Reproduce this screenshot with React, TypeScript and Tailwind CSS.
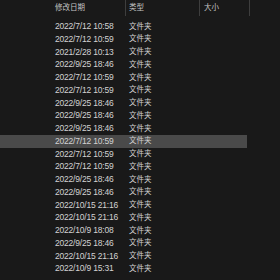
const rows: [string, boolean?][] = [
  ["2022/7/12 10:58"],
  ["2022/7/12 10:59"],
  ["2021/2/28 10:13"],
  ["2022/9/25 18:46"],
  ["2022/7/12 10:59"],
  ["2022/7/12 10:59"],
  ["2022/9/25 18:46"],
  ["2022/9/25 18:46"],
  ["2022/9/25 18:46"],
  ["2022/7/12 10:59", true],
  ["2022/7/12 10:59"],
  ["2022/7/12 10:59"],
  ["2022/9/25 18:46"],
  ["2022/9/25 18:46"],
  ["2022/10/15 21:16"],
  ["2022/10/15 21:16"],
  ["2022/10/9 18:08"],
  ["2022/9/25 18:46"],
  ["2022/10/15 21:16"],
  ["2022/10/9 15:31"],
];

const font = {
  fontFamily: '"Liberation Sans", "Noto Sans CJK SC", sans-serif',
};

export default function App() {
  return (
    <div
      className="w-[280px] h-[280px] overflow-hidden bg-[#191919] text-[#d2d2d2]"
      style={font}
    >
      {/* Column headers */}
      <div className="flex h-[20px] text-[#c4c4c4]">
        <div className="w-[125px] pl-[55px] pt-[2px] text-[7.5px] leading-[12px]">
          修改日期
        </div>
        <div className="w-[74px] border-l border-[#3e3e3e] h-[16px] pl-[3px] pt-[2px] text-[7.5px] leading-[12px]">
          类型
        </div>
        <div className="w-[50px] border-l border-[#3e3e3e] h-[16px] pl-[4px] pt-[2px] text-[7.5px] leading-[12px]">
          大小
        </div>
        <div className="border-l border-[#3e3e3e] h-[16px]" />
      </div>
      {/* Rows */}
      <div className="flex flex-col">
        {rows.map(([date, active], i) => (
          <div
            key={i}
            className={
              "flex items-center h-[12.75px] w-[247px] shrink-0 " +
              (active ? "bg-[#4a4a4a]" : "")
            }
          >
            <div className="w-[129px] pl-[55px] text-[8.5px] tracking-[-0.2px] leading-none whitespace-nowrap">
              {date}
            </div>
            <div className="text-[7.5px] leading-none whitespace-nowrap">文件夹</div>
          </div>
        ))}
      </div>
    </div>
  );
}
